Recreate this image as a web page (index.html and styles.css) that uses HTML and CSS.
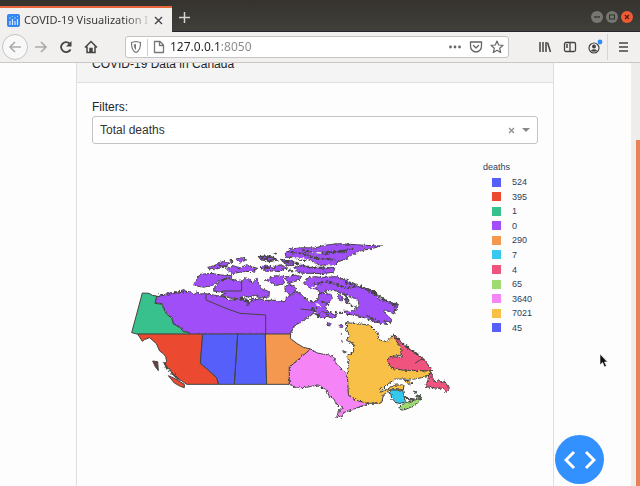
FILE: index.html
```html
<!DOCTYPE html>
<html lang="en">
<head>
<meta charset="utf-8">
<title>COVID-19 Visualization</title>
<link rel="stylesheet" href="styles.css">
</head>
<body>
<header class="tabs">
  <div class="tab">
    <svg class="favicon" width="13" height="13" viewBox="0 0 13 13"><rect width="13" height="13" rx="2" fill="#3385f5"/><path d="M3 11V7M5.500 11V5M8 11V7M10.500 11V5" stroke="#d8eaff" stroke-width="1.200"/><path d="M2 4h2M5 2.500h1M7 4h2M10 2.500h1" stroke="#7fe0f5"/></svg>
    <span class="tab-title">COVID-19 Visualization I</span>
    <button class="plain" aria-label="Close tab"><svg width="9" height="9" viewBox="0 0 9 9"><path d="M1 1l7 7M8 1L1 8" stroke="#444" stroke-width="1.400"/></svg></button>
  </div>
  <button class="plain new-tab" aria-label="New tab"><svg width="11" height="11" viewBox="0 0 11 11"><path d="M5.500 0v11M0 5.500h11" stroke="#d5d3cf" stroke-width="1.500"/></svg></button>
  <div class="window-buttons">
    <button class="round" aria-label="Minimize"><svg width="12" height="12" viewBox="0 0 12 12"><path d="M3 6h6" stroke="#33322e" stroke-width="1.300"/></svg></button>
    <button class="round" aria-label="Maximize"><svg width="12" height="12" viewBox="0 0 12 12"><rect x="3.500" y="4" width="5" height="4" fill="none" stroke="#33322e"/></svg></button>
    <button class="round close" aria-label="Close"><svg width="12" height="12" viewBox="0 0 12 12"><path d="M4 4l4 4M8 4L4 8" stroke="#5b1d0d" stroke-width="1.300"/></svg></button>
  </div>
</header>
<nav class="toolbar">
  <div class="nav-buttons">
    <button class="plain back" aria-label="Back"><svg width="14" height="14" viewBox="0 0 14 14" fill="none" stroke="#aaa" stroke-width="1.600"><path d="M13 7H2M7 2L2 7l5 5"/></svg></button>
    <button class="plain" aria-label="Forward"><svg width="14" height="14" viewBox="0 0 14 14" fill="none" stroke="#aaa" stroke-width="1.600"><path d="M1 7h11M7 2l5 5-5 5"/></svg></button>
    <button class="plain" aria-label="Reload"><svg width="14" height="14" viewBox="0 0 14 14" fill="none" stroke="#444" stroke-width="1.800"><path d="M11.500 9.500A5 5 0 1 1 10.500 3.500"/><path d="M12.500 1v5.500H7z" fill="#444" stroke="none"/></svg></button>
    <button class="plain" aria-label="Home"><svg width="14" height="14" viewBox="0 0 14 14" fill="none" stroke="#444" stroke-width="1.500"><path d="M1 7.500L7 1.500l6 6M3 6.500V12.500h8V6.500"/><path d="M6 12V8.500h2V12z" fill="#444"/></svg></button>
  </div>
  <div class="address">
    <svg width="12" height="14" viewBox="0 0 12 14"><path d="M6 1.500Q8.500 2 10.500 2.500C10.700 8 9.500 11 6 12.500C2.500 11 1.300 8 1.500 2.500Q3.500 2 6 1.500z" fill="none" stroke="#777" stroke-width="1.200"/><path d="M6 4v6C4.500 9 3.800 7 3.800 4.500z" fill="#777"/></svg>
    <span class="rule"></span>
    <svg width="12" height="14" viewBox="0 0 12 14"><path d="M1.500 1.500h5.500l3.500 3.500v7.500h-9zM6.500 1.500v4h4" fill="none" stroke="#777" stroke-width="1.300" stroke-linejoin="round"/></svg>
    <input class="url" type="text" aria-label="Address" value="127.0.0.1:8050">
    <button class="plain" aria-label="Page actions"><svg width="14" height="14" viewBox="0 0 14 14" fill="#666"><circle cx="2.500" cy="7" r="1.400"/><circle cx="7" cy="7" r="1.400"/><circle cx="11.500" cy="7" r="1.400"/></svg></button>
    <button class="plain" aria-label="Pocket"><svg width="14" height="14" viewBox="0 0 14 14" fill="none" stroke="#666" stroke-width="1.300" stroke-linecap="round" stroke-linejoin="round"><path d="M1.500 2h11v4c0 3.500-2.500 6-5.500 6s-5.500-2.500-5.500-6zM4.500 5.500L7 8l2.500-2.500"/></svg></button>
    <button class="plain" aria-label="Bookmark"><svg width="14" height="14" viewBox="0 0 14 14" fill="none" stroke="#666" stroke-width="1.200" stroke-linejoin="round"><path d="M7 1l1.700 4 4.300.4-3.300 2.900 1 4.200L7 10.300l-3.700 2.200 1-4.200L1 5.400 5.300 5z"/></svg></button>
  </div>
  <div class="tools">
    <button class="plain" aria-label="Library"><svg width="14" height="14" viewBox="0 0 14 14" fill="none" stroke="#444" stroke-width="1.500"><path d="M2 2v10M5 2v10M8 2v10M9.500 2.500l3 9.500"/></svg></button>
    <button class="plain" aria-label="Sidebar"><svg width="14" height="14" viewBox="0 0 14 14" fill="none" stroke="#444" stroke-width="1.300"><rect x="1.500" y="2.500" width="11" height="9" rx="1.500"/><path d="M7 2.500v9M3 5h2M3 7h2"/></svg></button>
    <button class="plain" aria-label="Account"><svg width="16" height="16" viewBox="0 0 16 16"><circle cx="7" cy="9" r="5" fill="none" stroke="#444" stroke-width="1.200"/><circle cx="7" cy="7.500" r="2" fill="#444"/><path d="M3.800 11.500q3.200-2.500 6.400 0Q7 14 3.800 11.500z" fill="#444"/><circle cx="13" cy="3" r="2.400" fill="#2b8cff"/></svg></button>
    <button class="plain menu" aria-label="Menu"><svg width="12" height="12" viewBox="0 0 12 12"><path d="M1 2h9M1 6h9M1 10h9" stroke="#444" stroke-width="1.500"/></svg></button>
  </div>
</nav>
<div class="viewport">
  <main class="page">
    <section class="card">
      <h1 class="card-header">COVID-19 Data in Canada</h1>
      <div class="card-body">
        <label class="filter-label" for="metric">Filters:</label>
        <div class="dropdown">
          <select id="metric"><option>Total deaths</option></select>
          <div class="dropdown-icons">
            <button class="plain" aria-label="Clear"><svg width="7" height="7" viewBox="0 0 7 7"><path d="M1 1l5 5M6 1L1 6" stroke="#888" stroke-width="1.100"/></svg></button>
            <svg width="8" height="4" viewBox="0 0 8 4"><path d="M0 0h8L4 4z" fill="#888"/></svg>
          </div>
        </div>
        <div class="chart">
          <svg class="map" viewBox="0 0 984 555" role="img" aria-label="Map of deaths by province">
            <defs><filter id="coast" x="-5%" y="-5%" width="110%" height="110%"><feTurbulence type="fractalNoise" baseFrequency="0.14" numOctaves="3" seed="4"/><feDisplacementMap in="SourceGraphic" scale="11" xChannelSelector="R" yChannelSelector="G"/></filter></defs>
            <g stroke="#444" stroke-width="3" stroke-linejoin="round">
              <g fill="#a04ff8" filter="url(#coast)">
                <path d="M95 183l15-5 12 5 8-9 14 2 8-6 8 6 5-9 13-3 6 9 10-5 11 12 10-9 8 6 17-1 15 2 25 5 20 3 10 10 20-3 15 3 20-5 7 17 6-17 22 0 20 5 30 0L480 200 485 185 500 182 510 170 525 175 535 185 555 200 572 200 580 188 585 174 618 178 622 190 612 205 598 215 612 232 635 243 625 250 595 240 580 245 572 235 572 225 560 240 545 250 530 262 510 270 500 290 495 298H193l-18-8-8-14-22-10-5-18-18-15-10-27-22-3z"/>
                <path d="M205 150l20-32 35-3 25 5 35 2v6l-35 7-20 15-30 7z"/>
                <path d="M275 150l10-12 25-8 20 5 20 5 12-12 14 6 5 12 14-15 6 15 10 16 22 7-1 17-28 3-12-8-22 5-12-3-18 8-25-2-27-8 12-6-15-4-20-3z"/>
                <path d="M245 98l25-7 10-9 20-2 15 5-15 11-35 8zM305 103l20-11 20 7 20-10 18 7 15 4-13 9-32 1-32 6zM330 73l20-5 15 7-20 7zM400 65l28-3 24 10-12 7-32-4zM405 98l15-8 25 7 25-8 12 9-17 12-20-2-20 1zM405 65l35 0 20 10-30 5zM470 76l35 1 2 14-22 2zM420 135l30-13 24 2 4 20-24 8-14-10zM480 127l30-7 20 5-15 13-27 7zM480 155l14-8 16 10 4 13-19 10-15-12z"/>
                <path d="M480 55l15-13 40-4 35 1 28-8 40-5 38 2 44 3 50 2-35 9-30 6-27 13-14 11-24 8-13 13-45-4-27-12-32-1-17-9-22 0z"/>
                <path d="M505 99l28-8 22 7 40-2 35 2-5 14-38 4-65-2z"/>
                <path d="M535 145l15-17 20-3 18 2 12 0 35-2 25 10 25 9 27 14 23 5 18 9 5 18 32 11 30 7-5 15-9 14-18-10-13-2 4 9 21 19-3 10-20-6 11 12-38-8-30-12-30-9-25-2-10-9 31-2 17-14-5-20-20-8-25-8-20-10-25 0-22 7-10-12-20-2z"/>
                <path d="M575 243l18-14 18 10-10 12-15-6zM608 262l12 5-4 6-11-2zM644 268l8 2-3 8-7-3zM314 76l10 1-3 6zM448 54l7 1-3 3zM637 178l16 4-3 16-10-4zM660 190l12 8-8 8z"/>
              </g>
              <path fill="#38c18c" d="M20 293L52 174l20 1 10 6 13 2-5 22 22 3 3 12 8 14 3 5 14 10 5 18 20 11 10 12 18 2v6H40z"/>
              <path fill="#eb4930" d="M38 297H233l-7 88 24 20 25 23 5 20H185l-17-12-9-4-9-10-9-7-7-14-10-3-6-13 7-5-3-15-7-9-11-8-10-22-20-18-16 6-6 5zM130 422l20 9 28 17v10l-12-4-18-10z"/>
              <path fill="#6a4038" d="M83 378l15 2 2 27-9-12z"/>
              <path fill="#575ffb" d="M233 297H338L328 448H281l-6-20-25-23-24-20zM338 297h83l4 151h-97z"/>
              <path fill="#f3984e" d="M421 297h76l-1 13 19 15 20 12 22 5-64 55v51h-68z"/>
              <g filter="url(#coast)">
                <path fill="#f584f7" d="M493 397l64-55 20 12 48 9 7 20 15 18 18 16 5 23v35l20 15 37 10v7l-22 8-25 10-25 8-5 14-15 0 5-17 15-12-18-8-12-20-12-5-8-20-25-15-35 7-30 2-22-11z"/>
                <path fill="#f8c046" d="M665 263l40 4 30 3 20 20 8 25 22 5 12-12 6-8 24 35 3 25-35 5-8 10 13 25 35 5 85 3-15 17-35 7-60 0-25 18-20 23 45-23 27 0-2 15-40 0-20 15-5 25H727l-37-10-20-15-3-69 5-35-8-10 22-15v-25l-22-10 10-15-10-20zM835 435l17 2 12 7-12 4z"/>
                <path fill="#ef537e" d="M805 297l22 18 12 19 28 17 28 20 17 22 8 15-85-3-35-5-13-25 8-10 34 2-2-32-14-18zM912 415l10 2-1 14 14 11 5-8 11 10 8-6 6 12 6 2 2 12-9 8-8-12-20 0-35-5 8-20z"/>
                <path fill="#36c8ef" d="M795 465l38 0 8 35-14 6-15-4-12-12z"/>
                <path fill="#9edb70" d="M823 517l18-14 29-8 20-8-8 14-12 10-30 13-12 1z"/>
                <path fill="#596b65" d="M835 482l18 8 16 2-13 5zM866 468l8 3-5 5zM872 484l10-7 2 11z"/>
              </g>
              <path fill="none" d="M243 178v17l60 25 42 15 77 5v57M350 140v28l-57 0"/>
              <g fill="none" stroke-width="6" stroke-dasharray="8 4 12 3 4 5" filter="url(#coast)">
                <path d="M98 184l32-8 36-6 20 0M345 190l22 10 10 0 22-9M367 198l3 14M280 91l25 4 8 7M405 97l45 2M485 50l48 5 40 15 55 4M500 78l40 16 75 8M565 149l45-10 50 19 44-5 40 21 50 28 24 7M663 178l12 32 20 8M725 242l38 18M118 382l10 22 22 19 15 14M805 300l28 26 35 25 24 18M590 50l65 0 30-10M530 45l70 12 75-13M660 142l44 13 42 17 38 27 28 12-6 22M470 75l38 14M480 98l24 14M408 68l36 8M590 200l20 4M560 222l16-4M630 232l26 2"/>
              </g>
              <g fill="none" stroke="#fdfdfd" stroke-width="4" filter="url(#coast)">
                <path d="M505 68l32 4 22 10M565 52l24 2M575 152l-14 8M670 230l14-12M600 92l30 2M575 206l14 10"/>
              </g>
              <path fill="none" d="M870 385l17-11 12-1M527 222l36 4M565 235l20 7M770 456l-7 8M653 347l11 4-7 3zM650 315l2 8M649 294v5"/>
            </g>
          </svg>
          <div class="legend">
            <h2>deaths</h2>
            <ul>
              <li class="indigo">524</li><li class="red">395</li><li class="green">1</li><li class="purple">0</li><li class="orange">290</li><li class="cyan">7</li><li class="rose">4</li><li class="lime">65</li><li class="pink">3640</li><li class="amber">7021</li><li class="indigo">45</li>
            </ul>
          </div>
        </div>
      </div>
    </section>
  </main>
  <div class="scrollbar"><div class="thumb"></div></div>
  <button class="debug" aria-label="Debug menu"><svg width="32" height="20" viewBox="0 0 32 20" fill="none" stroke="#fff" stroke-width="3"><path d="M10 2L2 10l8 8M22 2l8 8-8 8"/></svg></button>
  <svg class="pointer" width="9" height="15" viewBox="0 0 9 15"><path d="M1 1v11l2.500-2.500L5.500 14l2-1-2-4H8.500z" fill="#111" stroke="#fff" stroke-width=".6"/></svg>
</div>
</body>
</html>
```
FILE: styles.css
```css
* { box-sizing: border-box; }
body {
  margin: 0;
  height: 100vh;
  display: flex;
  flex-direction: column;
  overflow: hidden;
  background: #fdfdfd;
  color: #212529;
  font: 12px/18px "Liberation Sans", Arial, sans-serif;
}
svg { display: block; flex: none; }
.plain {
  display: flex;
  align-items: center;
  justify-content: center;
  border: 0;
  padding: 0;
  background: none;
}
.tabs {
  display: flex;
  align-items: flex-end;
  height: 32px;
  flex: none;
  background: linear-gradient(#36332e, #403f39);
  border-bottom: 1px solid #25282a;
}
.tab {
  display: flex;
  align-items: center;
  gap: 4px;
  width: 172px;
  height: 26px;
  margin-bottom: -1px;
  padding: 0 9px 0 7px;
  background: #f1f0ef;
  border-top: 2px solid #e9663c;
}
.tab-title {
  flex: 1;
  white-space: nowrap;
  font: 11px/16px "Noto Sans", sans-serif;
  color: transparent;
  background: linear-gradient(90deg, #333 80%, #ddd);
  background-clip: text;
}
.new-tab { width: 24px; height: 27px; }
.window-buttons {
  display: flex;
  gap: 3px;
  margin-left: auto;
  padding: 0 7px 8px 0;
}
.round {
  width: 12px;
  height: 12px;
  padding: 0;
  border: 0;
  border-radius: 50%;
  background: #777771;
}
.round.close { background: #f05a35; }
.toolbar {
  display: flex;
  align-items: center;
  height: 31px;
  flex: none;
  background: #f1f0ef;
  border-bottom: 1px solid #c8c7c6;
}
.nav-buttons { display: flex; align-items: center; width: 125px; padding-left: 2px; }
.nav-buttons .plain { width: 25px; height: 26px; }
.nav-buttons .back {
  width: 26px;
  border: 1px solid #c4c4c4;
  border-radius: 50%;
  background: #f8f8f8;
}
.address {
  display: flex;
  align-items: center;
  gap: 5px;
  flex: 1;
  height: 22px;
  padding: 0 2px 0 4px;
  border: 1px solid #c4c4c4;
  border-radius: 3px;
  background: #fff;
}
.address .plain { width: 16px; height: 18px; }
.address .plain:last-child { margin-right: 1px; }
.rule { width: 1px; height: 17px; background: #ccc; }
.url {
  flex: 1;
  min-width: 0;
  border: 0;
  padding: 0;
  font: 12px/18px "Noto Sans", sans-serif;
  color: transparent;
  background: linear-gradient(90deg, #222 51px, #888 51px);
  background-clip: text;
}
.tools { display: flex; align-items: center; width: 131px; padding-left: 23px; }
.tools .plain { width: 25px; height: 26px; }
.tools .menu { width: 32px; border-left: 1px solid #d5d5d5; }
.viewport { position: relative; display: flex; flex: 1; min-height: 0; overflow: hidden; }
.page { flex: 1; min-width: 0; padding: 0 77px 0 76px; }
.card {
  margin-top: -17px;
  min-height: 480px;
  border: 1px solid #dfdfdf;
  background: #fdfdfd;
}
.card-header {
  margin: 0;
  padding: 8px 15px 9px;
  border-bottom: 1px solid #dfdfdf;
  background: #f4f4f4;
  font-size: 12px;
  font-weight: 400;
  line-height: 18px;
}
.card-body { padding: 15px; }
.filter-label { display: block; }
.dropdown { position: relative; }
.dropdown select {
  display: block;
  width: 100%;
  height: 28px;
  padding: 0 7px;
  appearance: none;
  border: 1px solid #c4c4c4;
  border-radius: 3px;
  background: #fff;
  color: #333;
  font: 12px/18px "Liberation Sans", Arial, sans-serif;
}
.dropdown-icons {
  position: absolute;
  inset: 0 8px 0 auto;
  display: flex;
  align-items: center;
  gap: 7px;
}
.chart { display: flex; align-items: flex-start; padding: 16px 0 0 33px; }
.map { width: 328px; min-width: 0; flex: 0 1 328px; margin-top: 75px; }
.legend { margin-left: auto; width: 55px; color: #2a3f5f; font-size: 9px; line-height: 14px; }
.legend h2 { margin: 0; font-size: 9px; font-weight: 400; line-height: 15px; }
.legend ul {
  display: grid;
  grid-auto-rows: 1fr;
  align-items: center;
  height: 160px;
  margin: 0;
  padding: 0 0 0 9px;
  list-style: none;
}
.legend li { display: flex; align-items: center; gap: 11px; }
.legend li::before { content: ""; width: 9px; height: 9px; background: currentColor; }
.legend .indigo::before { background: #575ffb; }
.legend .red::before { background: #eb4930; }
.legend .green::before { background: #38c18c; }
.legend .purple::before { background: #a04ff8; }
.legend .orange::before { background: #f3984e; }
.legend .cyan::before { background: #36c8ef; }
.legend .rose::before { background: #ef537e; }
.legend .lime::before { background: #9edb70; }
.legend .pink::before { background: #f584f7; }
.legend .amber::before { background: #f8c046; }
.scrollbar { width: 9px; padding: 77px 0 0 5px; background: #eeedec; }
.thumb { height: 100%; background: #e98058; }
.debug {
  position: absolute;
  right: 36px;
  bottom: 2px;
  display: flex;
  align-items: center;
  justify-content: center;
  width: 49px;
  height: 49px;
  padding: 0;
  border: 0;
  border-radius: 50%;
  background: #3390ff;
}
.pointer { position: absolute; left: 599px; top: 290px; }
```
